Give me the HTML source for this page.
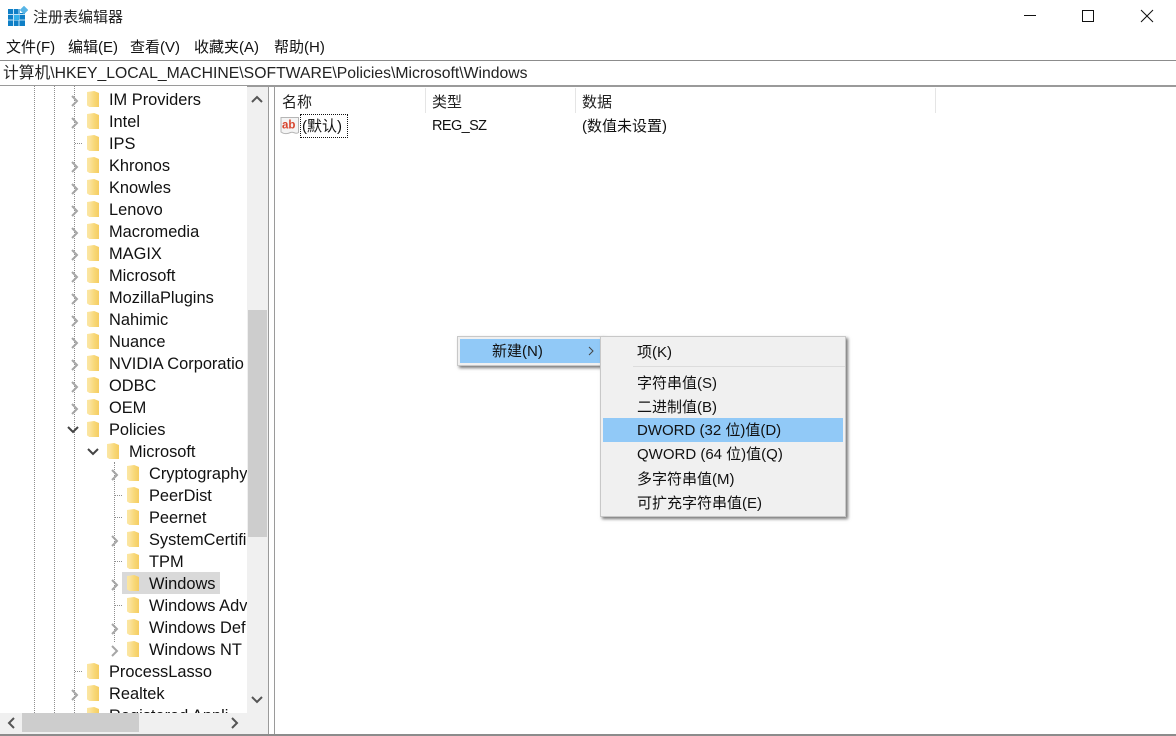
<!DOCTYPE html>
<html lang="zh"><head><meta charset="utf-8"><title>注册表编辑器</title>
<style>
*{box-sizing:border-box}
html,body{margin:0;padding:0;width:1176px;height:736px;overflow:hidden;background:#fff}
body{position:relative;font-family:"Liberation Sans","Noto Sans CJK SC",sans-serif;color:#111;font-size:15px}
.a{position:absolute;white-space:nowrap}
.m{top:38px;height:20px;line-height:20px;font-size:15px}
#tree{position:absolute;left:0;top:86px;width:247px;height:627px;overflow:hidden;background:#fff}
.r{position:absolute;height:22px;line-height:22px;font-size:16.4px;white-space:nowrap;margin-top:1px}
.f{position:absolute;width:12px;height:16px;background:linear-gradient(90deg,#fbe7a2 0,#fbe29a 25%,#f8d878 60%,#f5cd62 100%);clip-path:polygon(0 1px,60% 0,100% 2px,100% 100%,20% 100%,0 90%)}
.v{position:absolute;width:0;border-left:1px dotted #8f8f8f}
.h{position:absolute;height:0;width:7px;border-top:1px dotted #8f8f8f}
.mi{position:absolute;left:36px;height:24px;line-height:24px;font-size:15px;white-space:nowrap}
</style></head><body>

<svg class="a" style="left:8px;top:6px" width="20" height="20" viewBox="0 0 20 20">
<rect x="0" y="3" width="17" height="17" fill="#0f7fc6"/>
<g stroke="#bfe3f7" stroke-width="1"><path d="M5.500 3v17M11 3v17M0 8.500h17M0 14h17"/></g>
<rect x="6" y="9" width="5" height="5" fill="#33b0ea"/>
<rect x="12" y="0" width="8" height="7" fill="#fff"/>
<rect x="13" y="1" width="6" height="6" fill="#58b5e6" transform="rotate(45 16 4)"/>
</svg>
<div class="a" style="left:33px;top:8px;height:20px;line-height:20px;font-size:15px;color:#222">注册表编辑器</div>

<div class="a" style="left:1024px;top:15px;width:12px;height:1px;background:#111"></div>
<div class="a" style="left:1082px;top:10px;width:12px;height:12px;border:1px solid #111"></div>
<svg class="a" style="left:1140px;top:9px" width="14" height="14" viewBox="0 0 14 14"><path d="M1 1L13 13M13 1L1 13" stroke="#111" stroke-width="1" fill="none"/></svg>

<div class="a m" style="left:6px">文件(F)</div>
<div class="a m" style="left:68px">编辑(E)</div>
<div class="a m" style="left:130px">查看(V)</div>
<div class="a m" style="left:194px">收藏夹(A)</div>
<div class="a m" style="left:274px">帮助(H)</div>

<div class="a" style="left:0;top:60px;width:1176px;height:1px;background:#8c8c8c"></div>
<div class="a" style="left:3px;top:64px;height:20px;line-height:20px;font-size:15.750px;color:#222">计算机\HKEY_LOCAL_MACHINE\SOFTWARE\Policies\Microsoft\Windows</div>
<div class="a" style="left:0;top:85px;width:1176px;height:2px;background:#9a9a9a"></div>

<div id="tree">
<div class="v" style="left:34px;top:0;height:627px"></div>
<div class="v" style="left:54px;top:0;height:627px"></div>
<div class="v" style="left:74px;top:0;height:627px"></div>
<div class="v" style="left:114px;top:376px;height:180px"></div>
<div class="h" style="left:75px;top:57px"></div>
<div class="h" style="left:115px;top:409px"></div>
<div class="h" style="left:115px;top:431px"></div>
<div class="h" style="left:115px;top:475px"></div>
<div class="h" style="left:115px;top:519px"></div>
<div class="h" style="left:75px;top:585px"></div>
<div style="position:absolute;left:122px;top:486px;width:98px;height:22px;background:#d9d9d9"></div>

<svg style="position:absolute;left:0;top:0" width="247" height="627" fill="none" stroke="#a6a6a6" stroke-width="2">
<g transform="translate(1,2)">
<path d="M71 8l5 5-5 5M71 30l5 5-5 5M71 74l5 5-5 5M71 96l5 5-5 5M71 118l5 5-5 5M71 140l5 5-5 5M71 162l5 5-5 5M71 184l5 5-5 5M71 206l5 5-5 5M71 228l5 5-5 5M71 250l5 5-5 5M71 272l5 5-5 5M71 294l5 5-5 5M71 316l5 5-5 5M71 602l5 5-5 5"/>
<path d="M111 382l5 5-5 5M111 448l5 5-5 5M111 492l5 5-5 5M111 536l5 5-5 5M111 558l5 5-5 5"/>
</g>
<path stroke="#444" d="M68 341l5 5 5-5M88 363l5 5 5-5"/>
</svg>

<div class="f" style="left:87px;top:5px"></div><div class="r" style="left:109px;top:2px">IM Providers</div>
<div class="f" style="left:87px;top:27px"></div><div class="r" style="left:109px;top:24px">Intel</div>
<div class="f" style="left:87px;top:49px"></div><div class="r" style="left:109px;top:46px">IPS</div>
<div class="f" style="left:87px;top:71px"></div><div class="r" style="left:109px;top:68px">Khronos</div>
<div class="f" style="left:87px;top:93px"></div><div class="r" style="left:109px;top:90px">Knowles</div>
<div class="f" style="left:87px;top:115px"></div><div class="r" style="left:109px;top:112px">Lenovo</div>
<div class="f" style="left:87px;top:137px"></div><div class="r" style="left:109px;top:134px">Macromedia</div>
<div class="f" style="left:87px;top:159px"></div><div class="r" style="left:109px;top:156px">MAGIX</div>
<div class="f" style="left:87px;top:181px"></div><div class="r" style="left:109px;top:178px">Microsoft</div>
<div class="f" style="left:87px;top:203px"></div><div class="r" style="left:109px;top:200px">MozillaPlugins</div>
<div class="f" style="left:87px;top:225px"></div><div class="r" style="left:109px;top:222px">Nahimic</div>
<div class="f" style="left:87px;top:247px"></div><div class="r" style="left:109px;top:244px">Nuance</div>
<div class="f" style="left:87px;top:269px"></div><div class="r" style="left:109px;top:266px">NVIDIA Corporatio</div>
<div class="f" style="left:87px;top:291px"></div><div class="r" style="left:109px;top:288px">ODBC</div>
<div class="f" style="left:87px;top:313px"></div><div class="r" style="left:109px;top:310px">OEM</div>
<div class="f" style="left:87px;top:335px"></div><div class="r" style="left:109px;top:332px">Policies</div>
<div class="f" style="left:107px;top:357px"></div><div class="r" style="left:129px;top:354px">Microsoft</div>
<div class="f" style="left:127px;top:379px"></div><div class="r" style="left:149px;top:376px">Cryptography</div>
<div class="f" style="left:127px;top:401px"></div><div class="r" style="left:149px;top:398px">PeerDist</div>
<div class="f" style="left:127px;top:423px"></div><div class="r" style="left:149px;top:420px">Peernet</div>
<div class="f" style="left:127px;top:445px"></div><div class="r" style="left:149px;top:442px">SystemCertifi</div>
<div class="f" style="left:127px;top:467px"></div><div class="r" style="left:149px;top:464px">TPM</div>
<div class="f" style="left:127px;top:489px"></div><div class="r" style="left:149px;top:486px">Windows</div>
<div class="f" style="left:127px;top:511px"></div><div class="r" style="left:149px;top:508px">Windows Adv</div>
<div class="f" style="left:127px;top:533px"></div><div class="r" style="left:149px;top:530px">Windows Def</div>
<div class="f" style="left:127px;top:555px"></div><div class="r" style="left:149px;top:552px">Windows NT</div>
<div class="f" style="left:87px;top:577px"></div><div class="r" style="left:109px;top:574px">ProcessLasso</div>
<div class="f" style="left:87px;top:599px"></div><div class="r" style="left:109px;top:596px">Realtek</div>
<div class="f" style="left:87px;top:621px"></div><div class="r" style="left:109px;top:618px">Registered Appli</div>
</div>

<div class="a" style="left:247px;top:87px;width:21px;height:647px;background:#f0f0f0"></div>
<div class="a" style="left:248px;top:310px;width:19px;height:227px;background:#cdcdcd"></div>
<svg class="a" style="left:247px;top:87px" width="21" height="626" fill="none" stroke="#555" stroke-width="2"><path d="M5 15l5-5 5 5M5 610l5 5 5-5"/></svg>
<div class="a" style="left:0;top:713px;width:247px;height:21px;background:#f0f0f0"></div>
<div class="a" style="left:22px;top:713px;width:117px;height:19px;background:#cdcdcd"></div>
<svg class="a" style="left:0;top:713px" width="247" height="21" fill="none" stroke="#555" stroke-width="2"><path d="M14 5l-5 5 5 5M232 5l5 5-5 5"/></svg>
<div class="a" style="left:268px;top:87px;width:1px;height:648px;background:#9a9a9a"></div>
<div class="a" style="left:274px;top:87px;width:1px;height:648px;background:#9a9a9a"></div>
<div class="a" style="left:0;top:734px;width:1176px;height:2px;background:#8c8c8c"></div>

<div class="a" style="left:282px;top:93px;height:20px;line-height:20px;font-size:15px;color:#222">名称</div>
<div class="a" style="left:432px;top:93px;height:20px;line-height:20px;font-size:15px;color:#222">类型</div>
<div class="a" style="left:582px;top:93px;height:20px;line-height:20px;font-size:15px;color:#222">数据</div>
<div class="a" style="left:425px;top:88px;width:1px;height:25px;background:#e5e5e5"></div>
<div class="a" style="left:575px;top:88px;width:1px;height:25px;background:#e5e5e5"></div>
<div class="a" style="left:935px;top:88px;width:1px;height:25px;background:#e5e5e5"></div>

<svg class="a" style="left:280px;top:116px" width="20" height="20" viewBox="0 0 20 20">
<path d="M1 1.500h17.500v15c-3 2.500-5-1.500-8 0s-6 2-9.500-.5z" fill="#f4f4f4" stroke="#b5b5b5"/>
<text x="2" y="12.500" font-family="Liberation Sans,sans-serif" font-size="11.500" font-weight="bold" fill="#d8452e">ab</text>
</svg>
<div class="a" style="left:300px;top:114px;width:48px;height:24px;border:1px dotted #111;"></div>
<div class="a" style="left:302px;top:117px;height:20px;line-height:20px;font-size:15px">(默认)</div>
<div class="a" style="left:432px;top:116px;height:20px;line-height:20px;font-size:14.500px;letter-spacing:-.6px">REG_SZ</div>
<div class="a" style="left:582px;top:117px;height:20px;line-height:20px;font-size:15px">(数值未设置)</div>

<div class="a" style="left:457px;top:336px;width:146px;height:30px;background:#f0f0f0;border:1px solid #c8c8c8;box-shadow:2px 2px 3px #777"></div>
<div class="a" style="left:460px;top:339px;width:142px;height:24px;background:#91c9f7"></div>
<div class="a" style="left:492px;top:342px;height:20px;line-height:20px;font-size:15px">新建(N)</div>
<svg class="a" style="left:587px;top:346px" width="8" height="10" fill="none" stroke="#444" stroke-width="1"><path d="M2 1l4 4-4 4"/></svg>

<div class="a" style="left:600px;top:336px;width:246px;height:181px;background:#f0f0f0;border:1px solid #c8c8c8;box-shadow:2px 2px 3px #777">
<div class="a" style="left:32px;top:29px;width:212px;height:1px;background:#dcdcdc"></div>
<div class="a" style="left:2px;top:81px;width:240px;height:24px;background:#91c9f7"></div>
<div class="mi" style="top:4px">项(K)</div>
<div class="mi" style="top:35px">字符串值(S)</div>
<div class="mi" style="top:59px">二进制值(B)</div>
<div class="mi" style="top:82px">DWORD (32 位)值(D)</div>
<div class="mi" style="top:106px">QWORD (64 位)值(Q)</div>
<div class="mi" style="top:131px">多字符串值(M)</div>
<div class="mi" style="top:155px">可扩充字符串值(E)</div>
</div>
</body></html>
